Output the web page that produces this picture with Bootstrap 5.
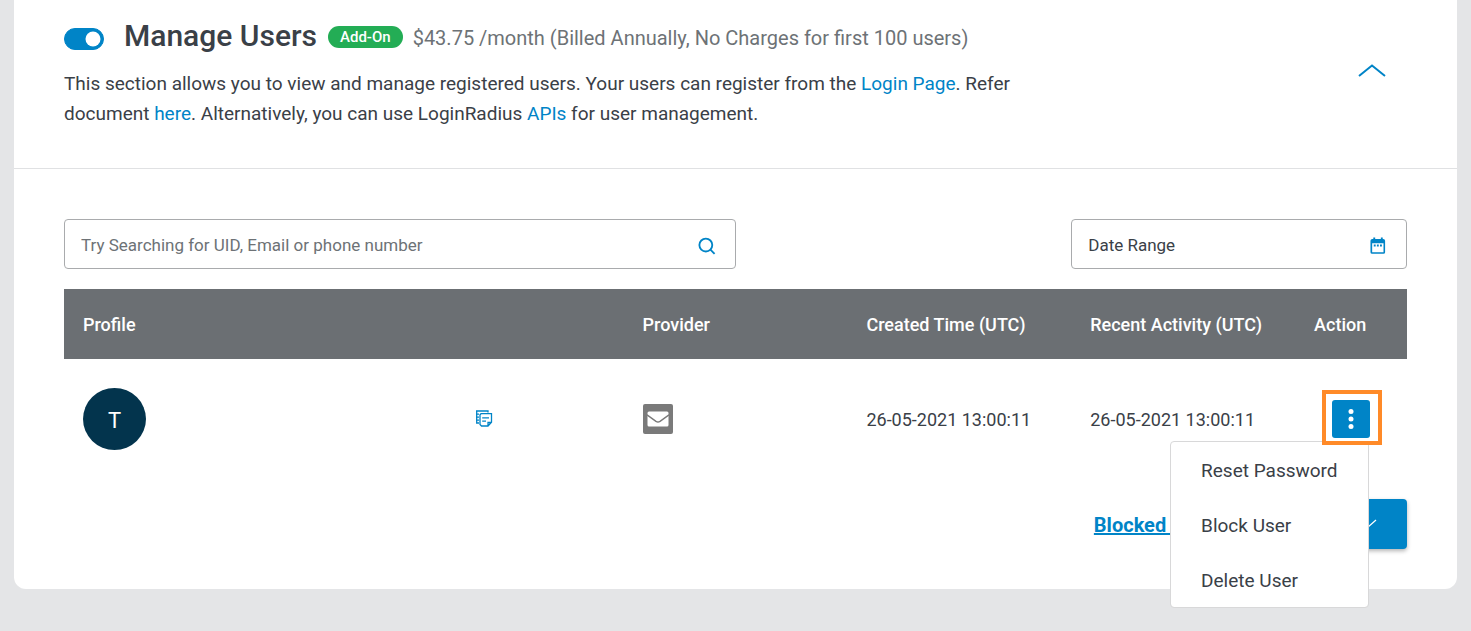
<!DOCTYPE html>
<html lang="en">
<head>
<meta charset="utf-8">
<meta name="viewport" content="width=device-width, initial-scale=1">
<title>Manage Users</title>
<link href="https://cdn.jsdelivr.net/npm/bootstrap@5.3.0/dist/css/bootstrap.min.css" rel="stylesheet">
<style>
  :root { --brand: #0084c7; --ink: #3a4047; --muted-ink: #6d7276; }
  body { background: #e4e5e7; color: var(--ink); font-family: Roboto, "Liberation Sans", sans-serif; font-size: 19px; }
  a { color: var(--brand); }
  .panel { margin: 0 14px 42px; border-radius: 0 0 12px 12px; }
  .panel-head { padding: 14px 50px 39px; border-bottom: 1px solid #e0e1e3; }
  .panel-main { padding: 50px 50px 40px; }
  .title-row { min-height: 44px; }
  .title-row .form-switch { padding: 5px 0 0; }
  .form-switch .form-check-input { width: 40px; height: 22px; margin: 0; background-color: #fff; border-color: #aaa; }
  .form-switch .form-check-input:checked { background-color: var(--brand); border-color: var(--brand);
    background-image: url("data:image/svg+xml,%3csvg xmlns='http://www.w3.org/2000/svg' viewBox='-4 -4 8 8'%3e%3ccircle r='3' fill='%23fff'/%3e%3c/svg%3e"); }
  .panel-title { font-size: 30px; line-height: 44px; font-weight: 500; margin: 0 11px 0 20px; }
  .addon { font-size: 15px; line-height: 22px; font-weight: 500; border-radius: 11px; background: #23ad55; padding: 0 12px; margin-top: 2px; }
  .price { font-size: 20px; color: var(--muted-ink); margin-left: 10px; padding-top: 4px; }
  .intro { font-size: 19px; line-height: 30px; margin-top: 11px; max-width: 980px; }
  .fold { width: 70px; height: 40px; }
  .field { height: 50px; border: 1px solid #a9abad; border-radius: 4px; padding: 4px 19px 0 16px; }
  .field .form-control { color: var(--ink); font-size: 17px; }
  .field .form-control::placeholder { color: var(--muted-ink); opacity: 1; }
  .field .dark-hint::placeholder { color: var(--ink); }
  .users { table-layout: fixed; margin: 20px 0; }
  .users th { background: #6b6f73; color: #fff; font-weight: 500; font-size: 18px; line-height: 30px; padding: 21px 0 19px 19px; white-space: nowrap; }
  .users td { font-size: 18px; padding: 29px 0 29px 19px; vertical-align: middle; white-space: nowrap; }
  .w-profile { width: 41.667%; } .w-mid { width: 16.667%; }
  .avatar { width: 63px; height: 62px; background: #03344d; font-size: 22px; padding-top: 2px; }
  .copy { margin-right: 130px; }
  .mail { width: 30px; height: 30px; background: #7a7a7a; border-radius: 2px; }
  .actions { width: 38px; margin-left: 18px; }
  .kebab { width: 38px; height: 38px; border-radius: 3px; background: var(--brand); }
  .kebab:hover { background: #0077b5; }
  .spotlight { inset: -10px -12px -7px -10px; border: 4px solid #ff8a28; z-index: 1010; pointer-events: none; }
  .actions .dropdown-menu { top: 41px; right: 1px; min-width: 199px; padding: 0; border: 1px solid #d8d8d9; border-radius: 4px; }
  .actions .dropdown-item { font-size: 19px; line-height: 30px; color: var(--ink); padding: 14px 30px 11px; }
  .more { width: 160px; height: 50px; border-radius: 4px; background: var(--brand); box-shadow: 0 2px 4px rgba(0,0,0,.3); padding-right: 30px; }
  .more:hover { background: #0077b5; }
  .blocked { font-size: 20px; padding-top: 2px; }
</style>
</head>
<body>
<main class="panel bg-white">
  <header class="panel-head d-flex justify-content-between align-items-center">
    <div>
      <div class="title-row d-flex align-items-center">
        <div class="form-check form-switch d-flex m-0">
          <input class="form-check-input" type="checkbox" role="switch" aria-label="Manage Users" checked>
        </div>
        <h1 class="panel-title">Manage Users</h1>
        <span class="addon text-white">Add-On</span>
        <span class="price">$43.75 /month (Billed Annually, No Charges for first 100 users)</span>
      </div>
      <p class="intro mb-0">This section allows you to view and manage registered users. Your users can register from the <a class="text-decoration-none" href="#">Login Page</a>. Refer document <a class="text-decoration-none" href="#">here</a>. Alternatively, you can use LoginRadius <a class="text-decoration-none" href="#">APIs</a> for user management.</p>
    </div>
    <button class="fold btn p-0 border-0" type="button" aria-label="Collapse section">
      <svg width="28" height="16" viewBox="0 0 28 16" fill="none" stroke="#0084c7" stroke-width="2"><path d="M1 12 14 1.500l13 10.500"/></svg>
    </button>
  </header>

  <section class="panel-main">
    <form class="row g-0 justify-content-between">
      <div class="col-6">
        <div class="field d-flex align-items-center">
          <input class="form-control border-0 p-0 shadow-none" type="text" aria-label="Search users" placeholder="Try Searching for UID, Email or phone number">
          <svg width="18" height="18" viewBox="0 0 19 19" fill="none" stroke="#0084c7" stroke-width="2"><circle cx="8.500" cy="8.500" r="7"/><path d="m13.500 13.500 4.500 4.500"/></svg>
        </div>
      </div>
      <div class="col-3">
        <div class="field d-flex align-items-center">
          <input class="dark-hint form-control border-0 p-0 shadow-none" type="text" aria-label="Date Range" placeholder="Date Range">
          <svg width="18" height="18" viewBox="0 0 18 18"><path fill="#0084c7" fill-rule="evenodd" d="M3.500 0h2v1.500h6V0h2v1.500h.5a2 2 0 0 1 2 2V15.500a1.800 1.800 0 0 1-1.800 1.800H2.300A1.800 1.800 0 0 1 .5 15.500V3.500a2 2 0 0 1 2-2h1zM2.300 6v9.500h12V6z"/><path fill="#0084c7" d="M4 7.500h2v2H4zM7.300 7.500h2v2h-2zM10.600 7.500h2v2h-2z"/></svg>
        </div>
      </div>
    </form>

    <table class="users w-100">
      <thead>
        <tr><th class="w-profile" scope="col">Profile</th><th class="w-mid" scope="col">Provider</th><th class="w-mid" scope="col">Created Time (UTC)</th><th class="w-mid" scope="col">Recent Activity (UTC)</th><th scope="col">Action</th></tr>
      </thead>
      <tbody>
        <tr>
          <td>
            <div class="d-flex align-items-center justify-content-between">
              <span class="avatar rounded-circle text-white d-flex align-items-center justify-content-center">T</span>
              <button class="copy btn p-0 border-0 d-flex" type="button" aria-label="Copy">
                <svg width="18" height="18" viewBox="0 0 18 18" fill="none" stroke="#0084c7" stroke-width="1.300"><path d="M12 2.500V1H0M0 4.200h3M0 7.200h3M0 10.200h3M.7 1v12H3"/><path d="M5 3.700h10.500v8.500L12 16H5.500L4 14.500V4.700zM12 16v-3.500h3.500M6.200 7.800H13M6.200 11.200H10"/></svg>
              </button>
            </div>
          </td>
          <td>
            <span class="mail d-flex align-items-center justify-content-center" role="img" aria-label="Email">
              <svg width="22" height="16" viewBox="0 0 22 16"><rect x="0.500" y="0.500" width="21" height="15" rx="1.500" fill="#fff"/><path d="m0 3.800 9 6.600q2 1.300 4 0l9-6.600" fill="none" stroke="#7a7a7a" stroke-width="1.400"/></svg>
            </span>
          </td>
          <td>26-05-2021 13:00:11</td>
          <td>26-05-2021 13:00:11</td>
          <td>
            <div class="actions dropdown">
              <button class="kebab btn p-0 border-0 d-flex align-items-center justify-content-center" type="button" aria-label="User actions" aria-expanded="true">
                <svg width="6" height="22" viewBox="0 0 6 22" fill="#fff"><circle cx="3" cy="3.500" r="2.500"/><circle cx="3" cy="11" r="2.500"/><circle cx="3" cy="18.500" r="2.500"/></svg>
              </button>
              <span class="spotlight position-absolute"></span>
              <ul class="dropdown-menu show">
                <li><button class="dropdown-item" type="button">Reset Password</button></li>
                <li><button class="dropdown-item" type="button">Block User</button></li>
                <li><button class="dropdown-item" type="button">Delete User</button></li>
              </ul>
            </div>
          </td>
        </tr>
      </tbody>
    </table>

    <div class="d-flex justify-content-end align-items-center gap-4">
      <a class="blocked fw-bold" href="#">Blocked Users</a>
      <button class="more btn border-0 d-flex align-items-center justify-content-end" type="button" aria-label="More options">
        <svg width="20" height="10" viewBox="0 0 20 10" fill="none" stroke="#fff" stroke-width="1.300"><path d="m1 1 9 8 9-8"/></svg>
      </button>
    </div>
  </section>
</main>
<script src="https://cdn.jsdelivr.net/npm/bootstrap@5.3.0/dist/js/bootstrap.bundle.min.js"></script>
</body>
</html>
